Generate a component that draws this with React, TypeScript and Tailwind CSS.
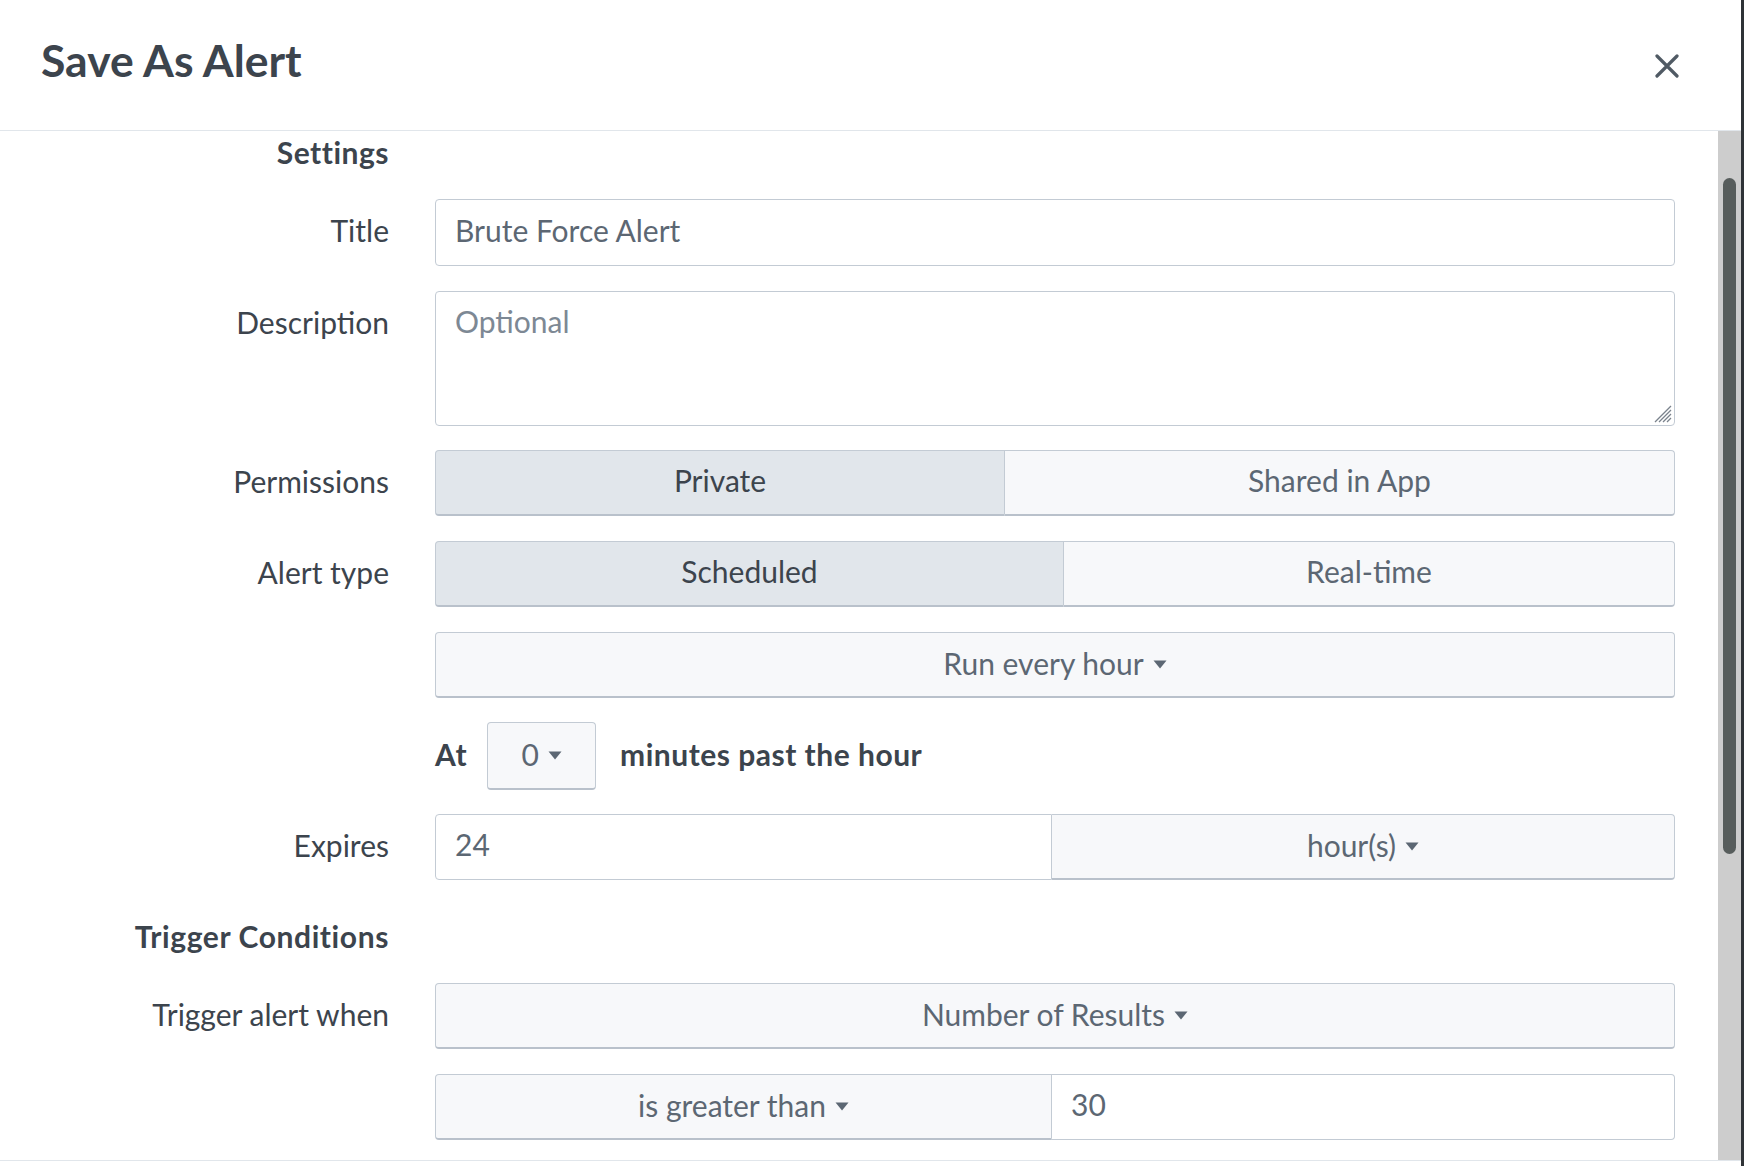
import React from 'react';

function Caret() {
  return (
    <svg width="14" height="9" viewBox="0 0 14 9" className="ml-[9px] mt-[4px] inline-block shrink-0">
      <path d="M0.5 0.5 H13.5 L7 8.5 Z" fill="#5c6773" />
    </svg>
  );
}

function Label({ children }: { children: React.ReactNode }) {
  return (
    <div className="w-[389px] shrink-0 h-[66px] pb-[5px] flex items-center justify-end text-[#3c444d]">
      {children}
    </div>
  );
}

function Dropdown({ text, className = '' }: { text: string; className?: string }) {
  return (
    <div
      className={`h-[66px] pb-[4px] flex items-center justify-center bg-[#f7f8fa] border border-[#c3cbd4] border-b-2 border-b-[#b9c1cb] rounded-[4px] text-[#5c6773] ${className}`}
    >
      {text}
      <Caret />
    </div>
  );
}

export default function App() {
  return (
    <div className="h-[1166px] w-full bg-[#2f3337] overflow-hidden font-['Lato',sans-serif] text-[30px] leading-[36px]">
      <div className="w-[1741px] h-full bg-white flex flex-col">
        {/* Cabeçalho */}
        <div className="h-[131px] shrink-0 border-b border-[#e1e6eb] flex items-center justify-between pl-[41px] pr-[62px]">
          <h2 className="text-[44.5px] leading-[50px] font-bold text-[#3c444d] -mt-[10px]">Save As Alert</h2>
          <button className="w-[24px] h-[24px] mt-[2px]">
            <svg width="24" height="24" viewBox="0 0 24 24">
              <path d="M2 2 L22 22 M22 2 L2 22" stroke="#505a64" strokeWidth="3.2" strokeLinecap="round" />
            </svg>
          </button>
        </div>

        {/* Corpo com rolagem */}
        <div className="h-[1029px] shrink-0 flex">
          <div className="flex-1 pt-[3px] pr-[43px]">
            <div className="flex items-center h-[36px] mb-[29px]">
              <div className="w-[389px] text-right font-bold tracking-[0.5px] text-[#3c444d]">Settings</div>
            </div>

            {/* Title */}
            <div className="flex mb-[25px]">
              <Label>Title</Label>
              <input
                readOnly
                value="Brute Force Alert"
                className="ml-[46px] flex-1 h-[67px] px-[19px] pb-[6px] border border-[#c3cbd4] rounded-[4px] text-[#5c6773] outline-none"
              />
            </div>

            {/* Description */}
            <div className="flex mb-[24px]">
              <Label>Description</Label>
              <div className="ml-[46px] flex-1 relative">
                <textarea
                  readOnly
                  placeholder="Optional"
                  className="block w-full h-[135px] px-[19px] pt-[11px] border border-[#c3cbd4] rounded-[4px] text-[#5c6773] placeholder:text-[#7d8894] outline-none resize-none"
                />
                <svg width="18" height="18" viewBox="0 0 18 18" className="absolute right-[3px] bottom-[3px]">
                  <path
                    d="M17 1 L1 17 M17 5 L5 17 M17 9 L9 17 M17 13 L13 17"
                    stroke="#7a828c"
                    strokeWidth="1.3"
                  />
                </svg>
              </div>
            </div>

            {/* Permissions */}
            <div className="flex mb-[25px]">
              <Label>Permissions</Label>
              <div className="ml-[46px] flex-1 flex h-[66px]">
                <div className="w-[570px] pb-[5px] flex items-center justify-center bg-[#e1e6eb] border border-[#c3cbd4] border-b-2 border-b-[#b9c1cb] rounded-l-[4px] text-[#3c444d]">
                  Private
                </div>
                <div className="flex-1 pb-[5px] flex items-center justify-center bg-[#f7f8fa] border border-l-0 border-[#c3cbd4] border-b-2 border-b-[#b9c1cb] rounded-r-[4px] text-[#5c6773]">
                  Shared in App
                </div>
              </div>
            </div>

            {/* Alert type */}
            <div className="flex mb-[25px]">
              <Label>Alert type</Label>
              <div className="ml-[46px] flex-1 flex h-[66px]">
                <div className="w-[629px] pb-[5px] flex items-center justify-center bg-[#e1e6eb] border border-[#c3cbd4] border-b-2 border-b-[#b9c1cb] rounded-l-[4px] text-[#3c444d]">
                  Scheduled
                </div>
                <div className="flex-1 pb-[5px] flex items-center justify-center bg-[#f7f8fa] border border-l-0 border-[#c3cbd4] border-b-2 border-b-[#b9c1cb] rounded-r-[4px] text-[#5c6773]">
                  Real-time
                </div>
              </div>
            </div>

            {/* Run every hour */}
            <div className="flex mb-[25px]">
              <div className="w-[389px] shrink-0" />
              <Dropdown text="Run every hour" className="ml-[46px] flex-1" />
            </div>

            {/* At ... minutes past the hour */}
            <div className="flex mb-[25px]">
              <div className="w-[389px] shrink-0" />
              <div className="ml-[46px] flex items-center h-[66px] font-bold tracking-[0.5px] text-[#3c444d]">
                <span className="pb-[5px]">At</span>
                <Dropdown text="0" className="ml-[20px] w-[109px] h-[68px] font-normal tracking-normal" />
                <span className="ml-[24px] pb-[5px]">minutes past the hour</span>
              </div>
            </div>

            {/* Expires */}
            <div className="flex mb-[40px]">
              <Label>Expires</Label>
              <div className="ml-[46px] flex-1 flex h-[66px]">
                <input
                  readOnly
                  value="24"
                  className="w-[617px] h-full px-[19px] pb-[6px] border border-[#c3cbd4] rounded-l-[4px] text-[#5c6773] outline-none"
                />
                <Dropdown text="hour(s)" className="flex-1 border-l-0 rounded-l-none" />
              </div>
            </div>

            {/* Trigger Conditions */}
            <div className="flex items-center h-[36px] mb-[27px]">
              <div className="w-[389px] pb-[4px] text-right font-bold tracking-[0.6px] text-[#3c444d]">Trigger Conditions</div>
            </div>

            <div className="flex mb-[25px]">
              <Label>Trigger alert when</Label>
              <Dropdown text="Number of Results" className="ml-[46px] flex-1" />
            </div>

            <div className="flex">
              <div className="w-[389px] shrink-0" />
              <div className="ml-[46px] flex-1 flex h-[66px]">
                <Dropdown text="is greater than" className="w-[617px] rounded-r-none" />
                <input
                  readOnly
                  value="30"
                  className="flex-1 h-full px-[19px] pb-[6px] border border-l-0 border-[#c3cbd4] rounded-r-[4px] text-[#5c6773] outline-none"
                />
              </div>
            </div>
          </div>

          {/* Barra de rolagem */}
          <div className="w-[23px] shrink-0 bg-[#cdcdcd] pt-[47px] flex justify-center">
            <div className="w-[13px] h-[676px] rounded-full bg-[#575d5c]" />
          </div>
        </div>

        {/* Rodapé (cortado) */}
        <div className="flex-1 border-t border-[#e1e6eb]" />
      </div>
    </div>
  );
}
